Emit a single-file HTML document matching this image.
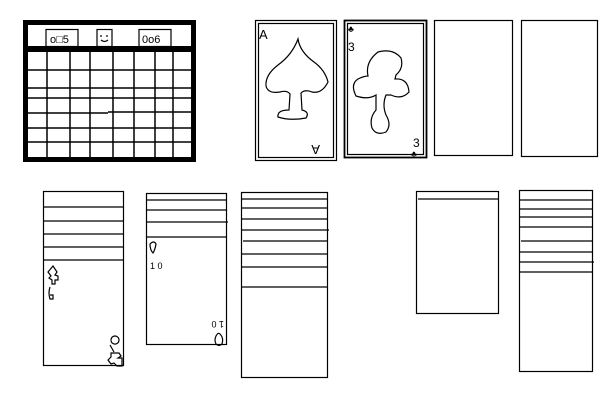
<!DOCTYPE html>
<html><head><style>
html,body{margin:0;padding:0;background:#fff;width:600px;height:400px;overflow:hidden}
svg{display:block}
text{font-family:"Liberation Sans",sans-serif;fill:#000}
</style></head><body>
<svg width="600" height="400" viewBox="0 0 600 400" xmlns="http://www.w3.org/2000/svg" fill="none" stroke="#000" stroke-width="1.2">
<!-- Minesweeper -->
<rect x="25.5" y="22.5" width="168" height="137" stroke-width="5"/>
<rect x="23" y="46" width="172" height="6" fill="#000" stroke="none"/>
<rect x="46" y="29.5" width="32" height="17" stroke-width="1.2"/>
<rect x="97" y="29.5" width="15" height="17"/>
<rect x="139" y="29.5" width="32" height="17"/>
<text x="50" y="43" font-size="11" stroke="none" font-family="Liberation Mono">o□5</text>
<text x="142" y="43" font-size="11" stroke="none" font-family="Liberation Mono">0o6</text>
<path d="M101 35v2M107 35v2M101 40q3.5 3 7 0"/>
<g stroke-width="1.5">
<path d="M47 52v105M70 52v105M90 52v105M113 52v105M134 52v105M155 52v105M173 52v105"/>
<path d="M28 70h165M28 88h165M28 98h165M28 113h80M108 112h85M28 128h165M28 142h165"/>
</g>
<!-- Ace of spades -->
<rect x="255.5" y="20.5" width="81" height="140"/>
<rect x="258.5" y="23.5" width="75" height="134"/>
<text x="259" y="39" font-size="13" stroke="none">A</text>
<text x="330" y="145" font-size="13" stroke="none" transform="rotate(180 325 145)">A</text>
<path d="M298 39 Q292 55 278 65 Q265 75 266 86 Q268 94 280 92 Q287 90 290 94 L289 110 Q277 110 278 117 Q290 121 306 118 Q310 112 302 110 L301 93 Q305 89 312 92 Q322 94 328 82 Q325 70 314 62 Q300 52 298 39Z"/>
<!-- Three of clubs -->
<rect x="344.5" y="20.5" width="82" height="137" stroke-width="1.8"/>
<rect x="347.5" y="23.5" width="76" height="131"/>
<text x="348" y="51" font-size="12" stroke="none">3</text>
<text x="348" y="32" font-size="9" stroke="none">♣</text>
<text x="413" y="147" font-size="12" stroke="none">3</text>
<text x="411" y="157" font-size="9" stroke="none">♣</text>
<path d="M368 76 Q365 62 378 52 Q393 48 401 58 Q404 68 396 75 L395 79 Q408 78 409 92 Q402 100 391 95 L386 95 Q382 105 386 115 Q392 125 386 132 Q376 136 372 128 Q369 118 376 110 L376 95 Q368 100 356 96 Q350 84 358 79 Q364 76 368 76Z"/>
<!-- blank cards -->
<rect x="434.5" y="20.5" width="78" height="135"/>
<rect x="521.5" y="20.5" width="76" height="136"/>
<!-- col1 -->
<g stroke-width="1.2">
<rect x="43.5" y="191.5" width="80" height="174"/>
<path d="M43 207h80M43 221h80M43 234h80M43 247h80M43 260h80"/>
<path d="M48 272l5-6 4 6-2 3 3 1v4h-3l0 4h-3l0-4-3-2 2-2-3-4z"/>
<path d="M50 287q-2 6 0 12h3v-4h-3"/>
<path d="M111 340a4 4 0 1 1 0 .1M110 345l4 7"/>
<path d="M111 353h8l2 3-3 2h4v8h-5l-3-3-3 1-3-4 3-3z"/>
<!-- col2 -->
<rect x="146.5" y="193.5" width="80" height="151"/>
<path d="M146 200h80M146 210h80M146 222h82M146 237h80"/>
<path d="M150 244q4-4 6 0q-1 6-3 9q-3-3-3-9z"/>
<text x="150" y="269" font-size="9" stroke="none">1 0</text>
<text x="218" y="323" font-size="9" stroke="none" transform="rotate(180 221 322)">1 0</text>
<path d="M216 336q2-4 4-2q4 4 2 10q-3 3-6 0q-2-4 0-8z"/>
<!-- col3 -->
<rect x="241.5" y="192.5" width="86" height="185"/>
<path d="M241 199h86M241 208h86M241 219h86M241 230h88M243 241h84M241 254h86M241 267h86M241 287h86"/>
<!-- col4 -->
<rect x="416.5" y="191.5" width="82" height="122"/>
<path d="M418 199h80"/>
<!-- col5 -->
<rect x="519.5" y="190.5" width="73" height="181"/>
<path d="M519 200h73M519 209h73M519 217h73M519 227h73M521 241h71M519 252h73M519 262h75M519 272h73"/>
</g>
</svg>
</body></html>
